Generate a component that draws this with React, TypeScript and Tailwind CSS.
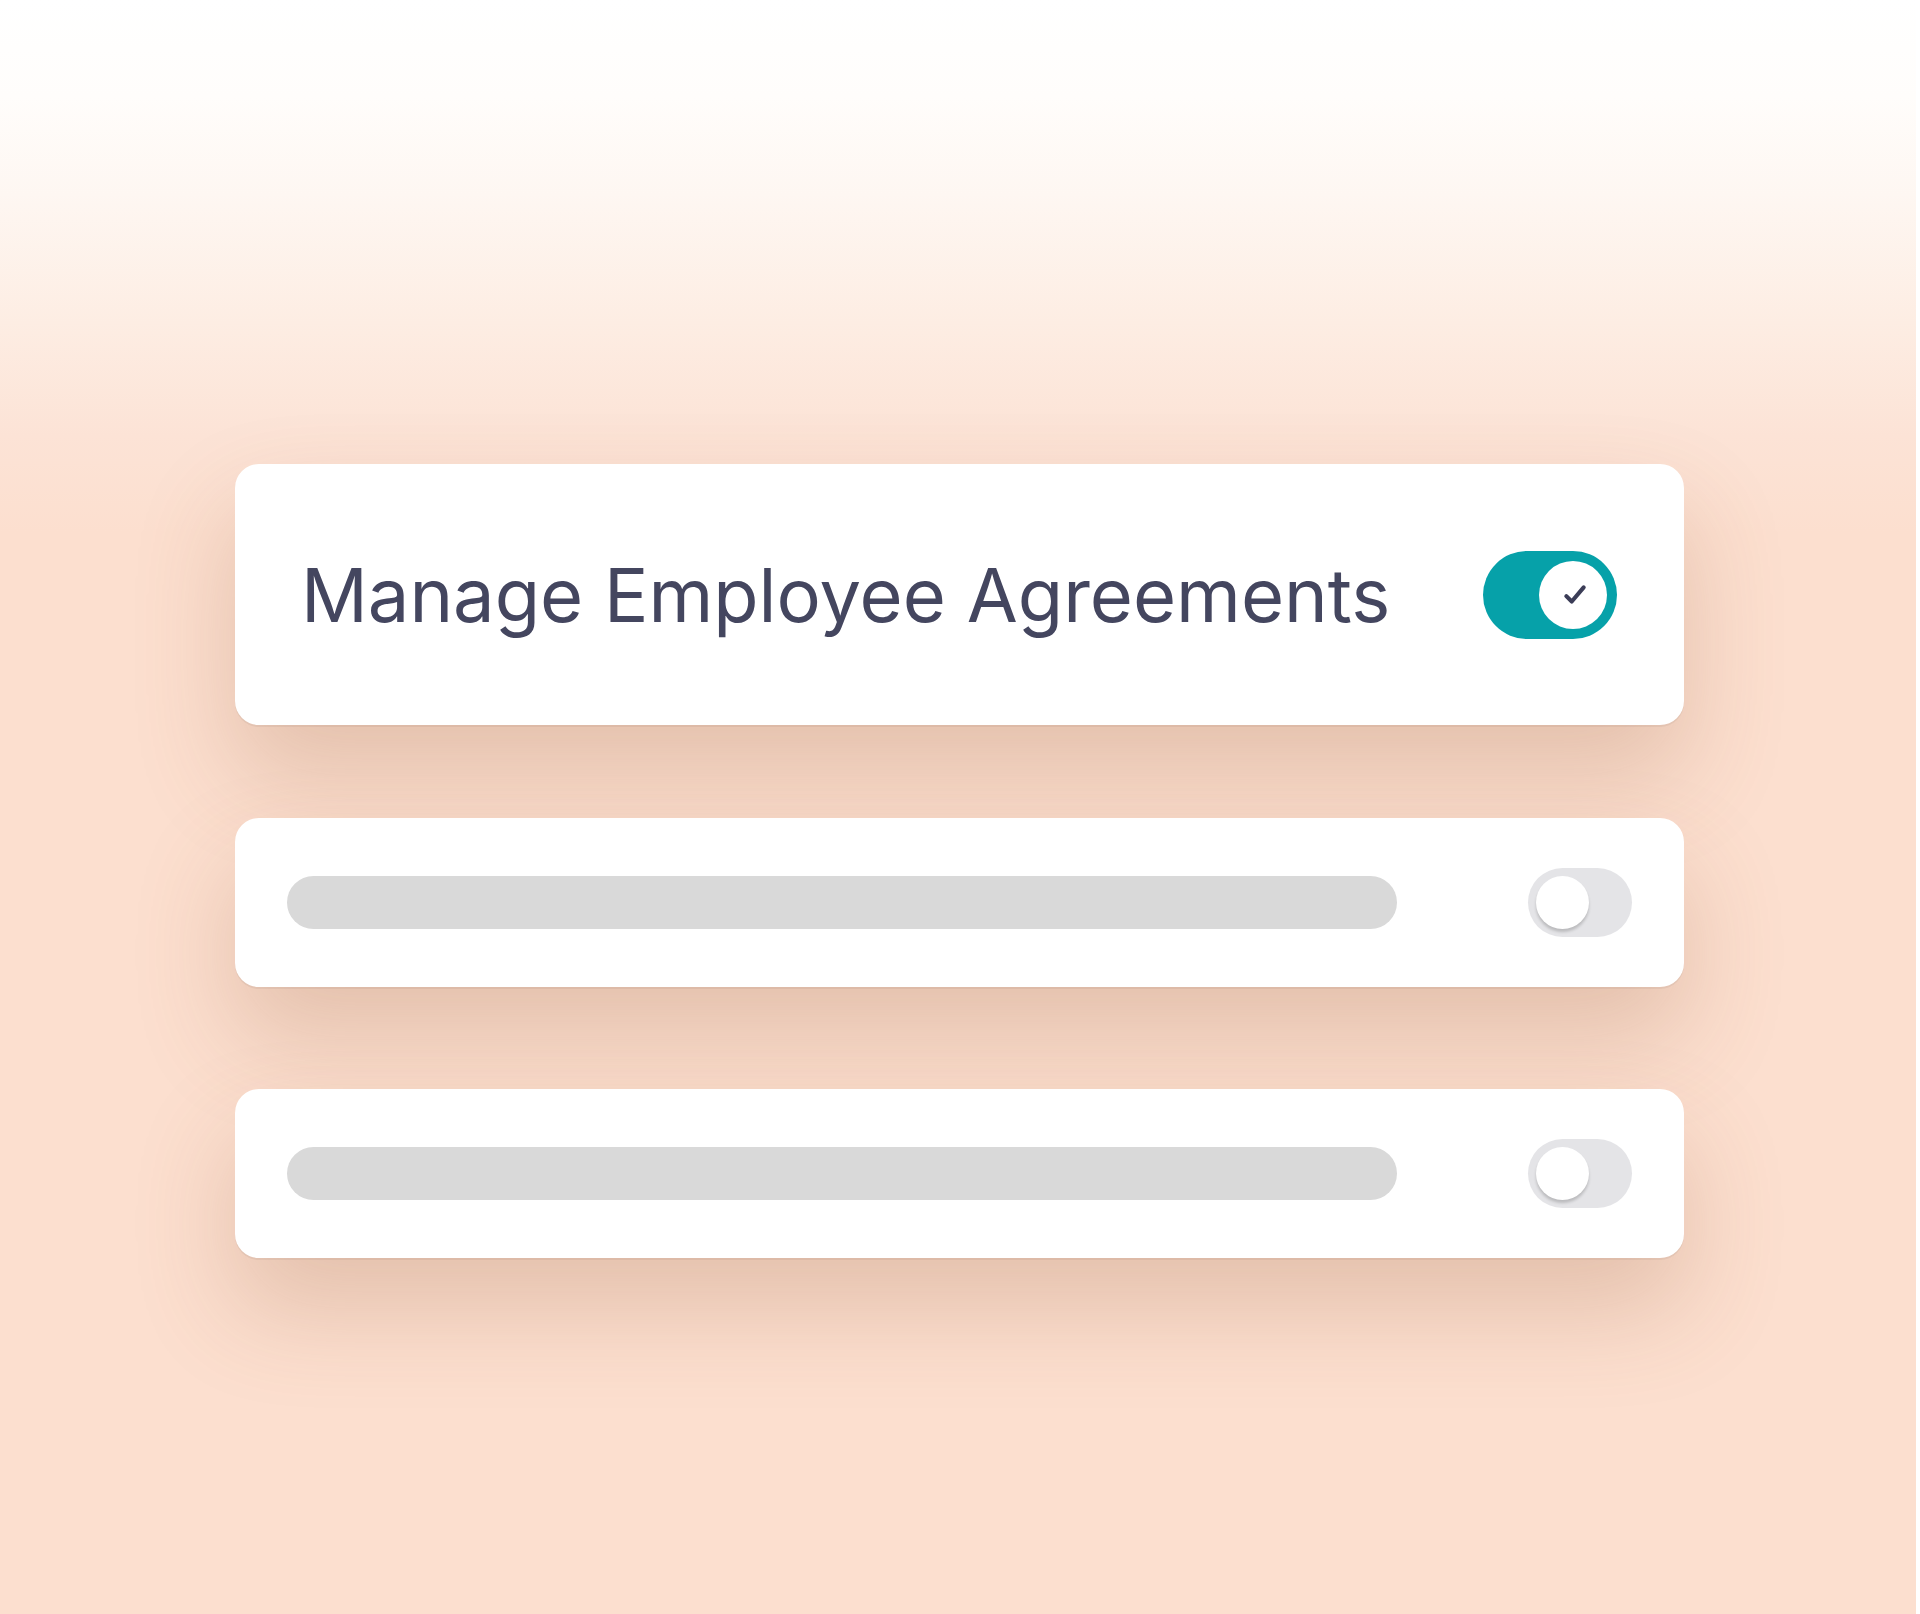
export default function App() {
  return (
    <div className="min-h-[1614px] w-[1920px] bg-white pr-[4px] pb-[2px]">
      <div
        className="min-h-[1612px] w-full pt-[464px] pl-[235px] pr-[232px] pb-[356px]"
        style={{
          background:
            "linear-gradient(180deg, #ffffff 0%, #fffdfb 6%, #fef7f2 12%, #fdede3 20%, #fce3d6 27%, #fcdfcf 33%, #fcdfcf 100%)",
        }}
      >
        <div className="flex flex-col">
          <div className="flex h-[261px] items-center justify-between rounded-[24px] bg-white pl-[66px] pr-[67px] shadow-[0_50px_100px_rgba(150,90,60,0.24),0_2px_0_rgba(0,0,0,0.05)]">
            <span
              className="text-[74px] leading-none text-[#44465f]"
              style={{ fontFamily: "Inter, 'Noto Sans', sans-serif" }}
            >
              Manage Employee Agreements
            </span>
            <div className="flex h-[88px] w-[134px] items-center justify-end rounded-full bg-[#06a1a9] pr-[10px]">
              <div className="flex h-[68px] w-[68px] items-center justify-center rounded-full bg-white">
                <svg width="26" height="26" viewBox="0 0 24 24" className="ml-[3px]">
                  <polyline
                    points="4,13 9,18 20,5"
                    fill="none"
                    stroke="#3b3d57"
                    strokeWidth="3.8"
                    strokeLinecap="round"
                    strokeLinejoin="round"
                  />
                </svg>
              </div>
            </div>
          </div>

          <div className="mt-[93px] flex h-[169px] items-center justify-between rounded-[24px] bg-white px-[52px] shadow-[0_50px_100px_rgba(150,90,60,0.24),0_2px_0_rgba(0,0,0,0.05)]">
            <div className="h-[53px] w-[1110px] rounded-full bg-[#d9d9d9]" />
            <div className="flex h-[69px] w-[104px] items-center rounded-full bg-[#e4e4e7] pl-[8px]">
              <div className="h-[53px] w-[53px] rounded-full bg-white shadow-[0_3px_3px_rgba(0,0,0,0.18)]" />
            </div>
          </div>

          <div className="mt-[102px] flex h-[169px] items-center justify-between rounded-[24px] bg-white px-[52px] shadow-[0_50px_100px_rgba(150,90,60,0.24),0_2px_0_rgba(0,0,0,0.05)]">
            <div className="h-[53px] w-[1110px] rounded-full bg-[#d9d9d9]" />
            <div className="flex h-[69px] w-[104px] items-center rounded-full bg-[#e4e4e7] pl-[8px]">
              <div className="h-[53px] w-[53px] rounded-full bg-white shadow-[0_3px_3px_rgba(0,0,0,0.18)]" />
            </div>
          </div>
        </div>
      </div>
    </div>
  );
}
